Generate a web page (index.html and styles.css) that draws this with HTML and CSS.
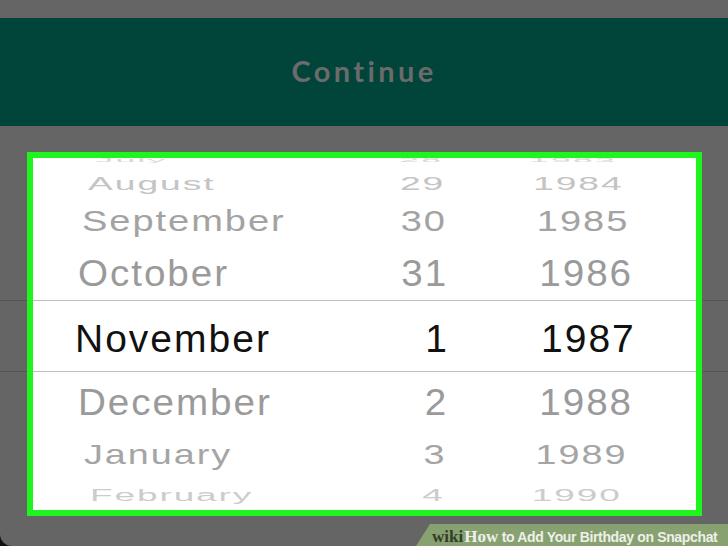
FILE: index.html
```html
<!DOCTYPE html>
<html lang="en">
<head>
    <meta charset="UTF-8">
    <meta name="viewport" content="width=device-width, initial-scale=1.0">
    <title>Add Your Birthday on Snapchat</title>
    <link rel="stylesheet" href="styles.css">
</head>
<body>
    <div class="screen">
        <div class="continue-bar">Continue</div>

        <div class="picker-area">
            <div class="picker">
                <div class="row edge-top"><span class="month">July</span><span class="day">28</span><span class="year">1983</span></div>
                <div class="row far-top"><span class="month">August</span><span class="day">29</span><span class="year">1984</span></div>
                <div class="row mid-top"><span class="month">September</span><span class="day">30</span><span class="year">1985</span></div>
                <div class="row near-top"><span class="month">October</span><span class="day">31</span><span class="year">1986</span></div>
                <div class="row selected"><span class="month">November</span><span class="day">1</span><span class="year">1987</span></div>
                <div class="row near-bottom"><span class="month">December</span><span class="day">2</span><span class="year">1988</span></div>
                <div class="row mid-bottom"><span class="month">January</span><span class="day">3</span><span class="year">1989</span></div>
                <div class="row far-bottom"><span class="month">February</span><span class="day">4</span><span class="year">1990</span></div>
                <div class="row edge-bottom"><span class="month">March</span><span class="day">5</span><span class="year">1991</span></div>
            </div>
        </div>

        <div class="watermark"><span class="wiki">wiki</span><span class="how">How</span> to Add Your Birthday on Snapchat</div>
    </div>
</body>
</html>
```

FILE: styles.css
```css
body {
    margin: 0;
    background-color: #111111;
    font-family: "Liberation Sans", Arial, sans-serif;
}
.screen {
    position: relative;
    width: 728px;
    height: 546px;
    box-sizing: border-box;
    padding-top: 18px;
    overflow: hidden;
    background-color: #656565;
    border-bottom-left-radius: 12px;
}
.continue-bar {
    height: 108px;
    box-sizing: border-box;
    padding-bottom: 3px;
    display: flex;
    align-items: center;
    justify-content: center;
    background-color: #00443a;
    color: #6b6b6b;
    font-family: Lato, sans-serif;
    font-weight: 700;
    font-size: 29px;
    letter-spacing: 3.4px;
}

/* grey band with the dimmed selection lines running under the picker */
.picker-area {
    padding: 26px 26px 0 27px;
    background: linear-gradient(to bottom,
        transparent 174px, #555555 174px, #555555 175px, transparent 175px,
        transparent 245px, #555555 245px, #555555 246px, transparent 246px);
}
.picker {
    height: 352px;
    border: 6px solid #1ff41f;
    background-color: #ffffff;
    overflow: hidden;
}
.row {
    display: grid;
    grid-template-columns: 282px 92px 1fr;
    align-items: center;
    box-sizing: border-box;
    padding-left: 42px;
    font-size: 39px;
    line-height: 39px;
    letter-spacing: 2px;
    color: #9a9a9a;
    white-space: nowrap;
    transform-origin: center;
}
.day {
    text-align: right;
}
.year {
    padding-left: 92px;
}

/* rows lean away from the viewer like a wheel */
.edge-top {
    height: 16px;
    margin-top: -8px;
    color: #d8d8d8;
    transform: scale(0.93, 0.16);
}
.far-top {
    height: 32px;
    color: #c4c4c4;
    transform: scale(0.955, 0.45);
}
.mid-top {
    height: 44px;
    color: #a3a3a3;
    transform: scale(0.976, 0.77);
}
.near-top {
    height: 58px;
    padding-top: 4px;
    transform: scale(0.99, 0.94);
}
.selected {
    height: 72px;
    padding-top: 4px;
    border-top: 1px solid #bdbdbd;
    border-bottom: 1px solid #bdbdbd;
    color: #111111;
}
.near-bottom {
    height: 60px;
    transform: scale(0.99, 0.94);
}
.mid-bottom {
    height: 48px;
    padding-bottom: 4px;
    color: #a5a5a5;
    transform: scale(0.969, 0.7);
}
.far-bottom {
    height: 24px;
    color: #cccccc;
    transform: scale(0.948, 0.42);
}
.edge-bottom {
    height: 12px;
    color: #dadada;
    transform: scale(0.92, 0.18);
}

.watermark {
    position: absolute;
    right: 0;
    bottom: 0;
    width: 312px;
    height: 22px;
    box-sizing: border-box;
    padding-left: 16px;
    line-height: 26px;
    background-color: #88a170;
    clip-path: polygon(14px 0, 100% 0, 100% 100%, 0 100%);
    color: #eef0ea;
    font-weight: 700;
    font-size: 14px;
    letter-spacing: -0.35px;
    white-space: nowrap;
}
.wiki, .how {
    font-family: "Liberation Serif", serif;
    font-size: 17px;
    letter-spacing: 0;
}
.wiki {
    color: #323d2c;
    margin-right: 1px;
}
```
